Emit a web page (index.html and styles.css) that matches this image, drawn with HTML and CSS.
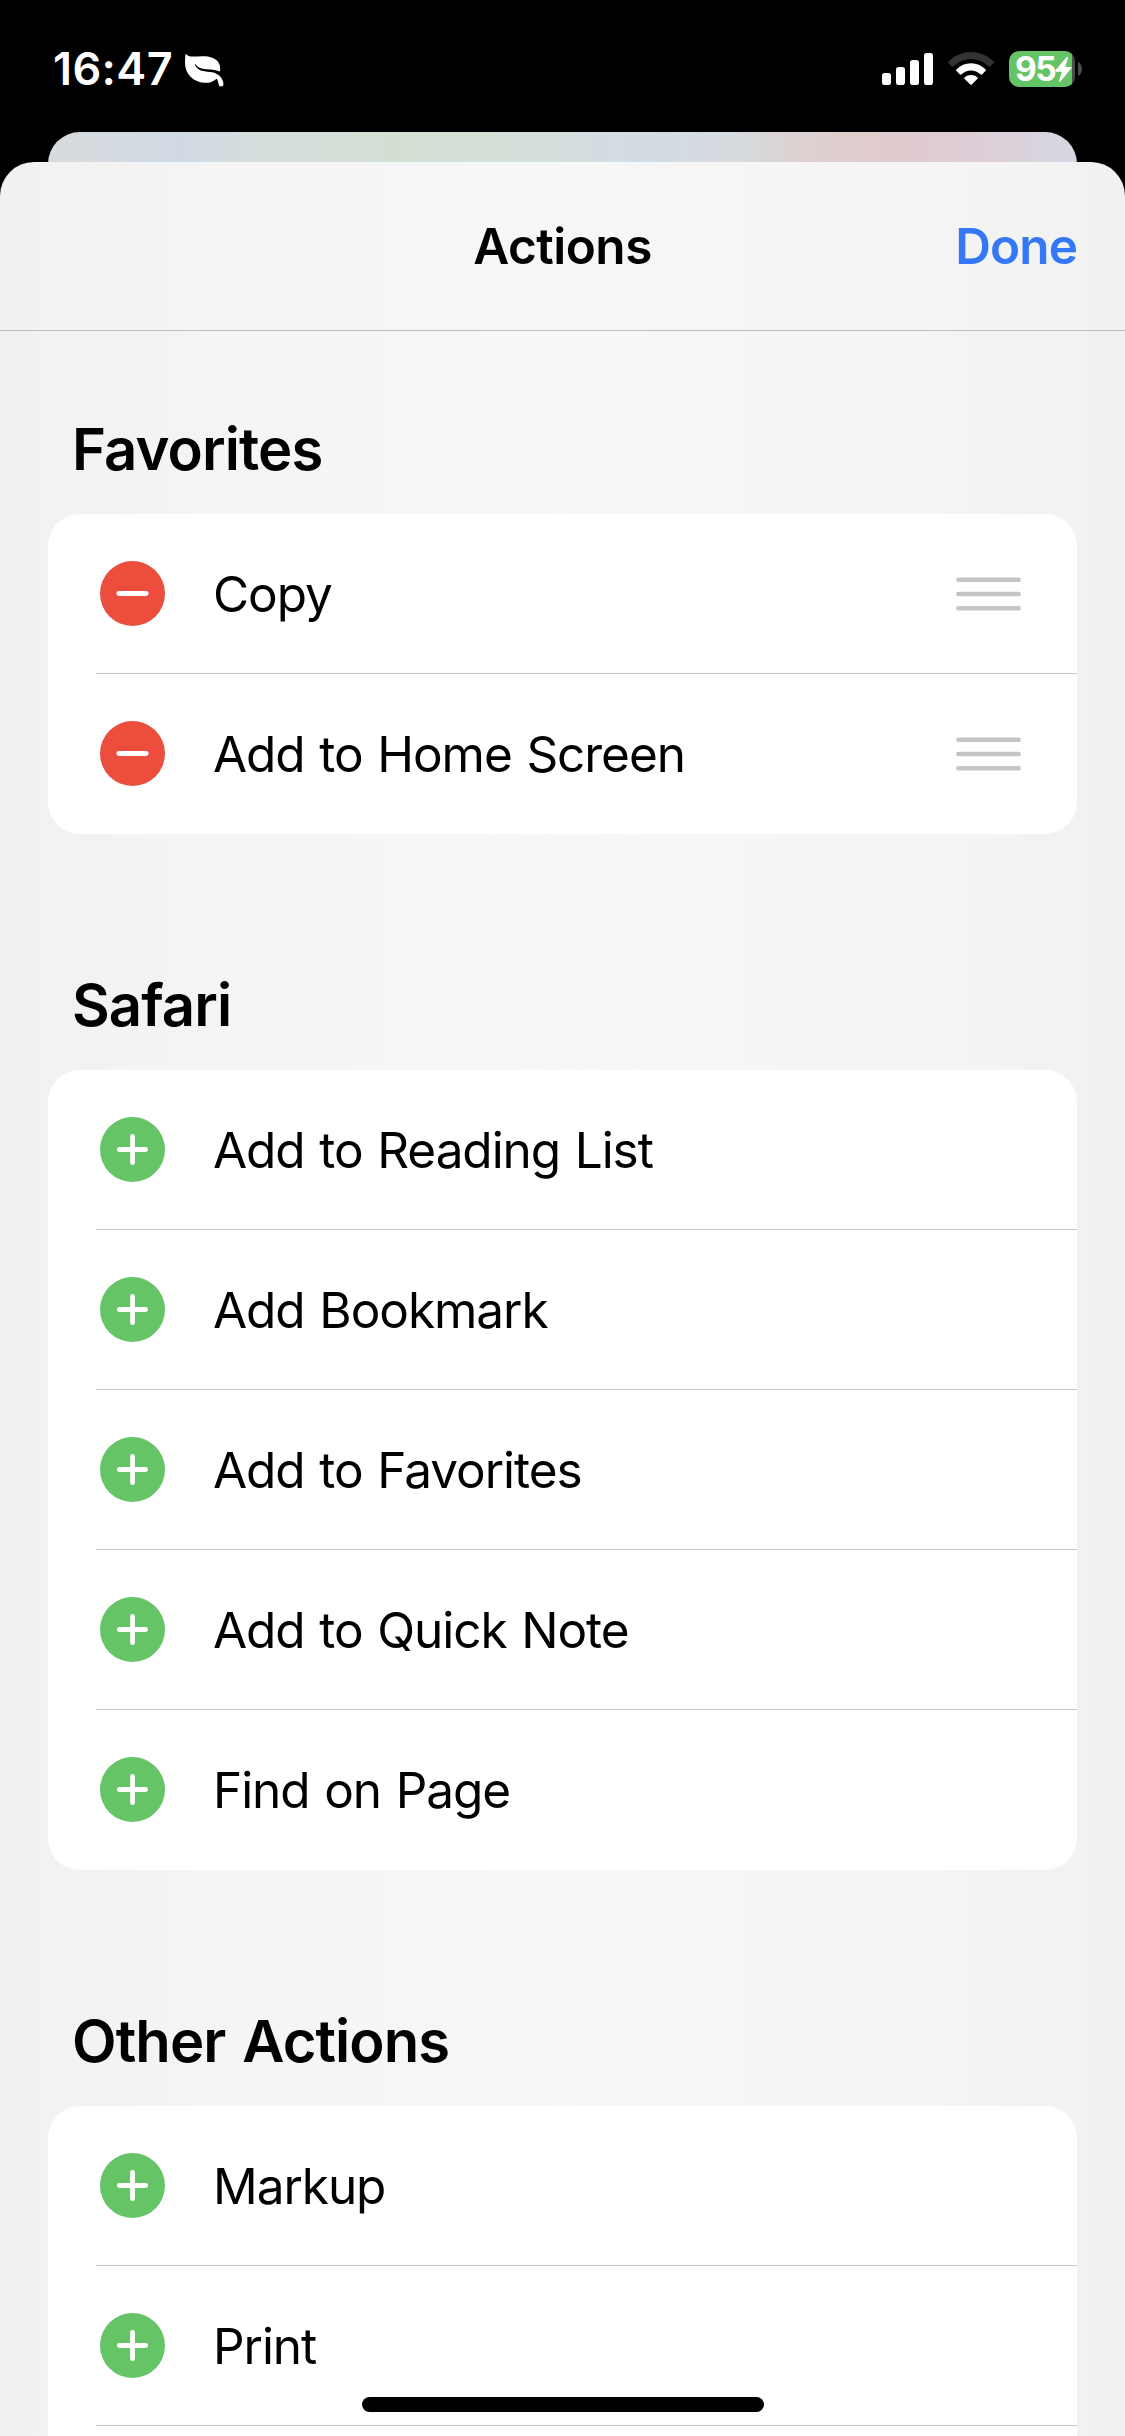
FILE: index.html
```
<!DOCTYPE html>
<html lang="en">
<head>
<meta charset="utf-8">
<title>Actions</title>
<link rel="stylesheet" href="styles.css">
</head>
<body>
<svg class="defs" width="0" height="0" aria-hidden="true">
  <symbol id="plus" viewBox="0 0 65 65"><circle cx="32.5" cy="32.5" r="32.5" fill="#65c466"/><path d="M32.5 19.3v26.4M19.3 32.5h26.4" stroke="#fff" stroke-width="4.8" stroke-linecap="round"/></symbol>
  <symbol id="minus" viewBox="0 0 65 65"><circle cx="32.5" cy="32.5" r="32.5" fill="#eb4e3d"/><path d="M18.8 32.5h27.4" stroke="#fff" stroke-width="4.8" stroke-linecap="round"/></symbol>
  <symbol id="grip" viewBox="0 0 65 34"><path d="M2.3 2.7h60.4M2.3 17h60.4M2.3 31.3h60.4" stroke="#c5c5c7" stroke-width="4.4" stroke-linecap="round"/></symbol>
</svg>
<div class="screen">
  <header class="status">
    <div class="status-left">
      <span class="time">16:47</span>
      <svg class="leaf" viewBox="0 0 39 33"><path fill="#fff" d="M1.2.2C4.500 3.600 10 2.400 17 2.200c9-.2 16 2.300 17.800 9.300.5 2 .5 4 .2 6C30 15.700 26 15.400 21.500 15.200 16.500 15 13.500 14 10.800 10.500c-.5-.6-1.300-.1-.9.6C12 15 15 17 20.500 17.400c6.500.4 10.500 1.100 14 4.400 2.600 2.500 4 6 4 8.700 0 2-3.700 2.800-4.500.8-.7-2-.8-4-2.200-6.600C28 28 23.500 29.200 19 28.800 8 28 0 19.500 0 9 0 5.500.3 2.500.4.600.5 0 .9-.1 1.200.2z"/></svg>
    </div>
    <div class="status-right">
      <svg class="signal" viewBox="0 0 51 32"><g fill="#fff"><rect y="20" width="9" height="12" rx="2.800"/><rect x="14" y="14" width="9" height="18" rx="2.800"/><rect x="28" y="7" width="9" height="25" rx="2.800"/><rect x="42" width="9" height="32" rx="2.800"/></g></svg>
      <svg class="wifi" viewBox="0 0 46 33"><path fill="#333" d="M.6 9.200C6.500 3.400 14.400 0 23 0s16.500 3.400 22.400 9.200c.7.700.7 1.300 0 2l-3 3c-.7.700-1.300.7-2 0C35.800 9.800 29.700 7.200 23 7.200S10.200 9.800 5.600 14.200c-.7.700-1.300.7-2 0l-3-3c-.7-.7-.7-1.300 0-2z"/><path fill="#fff" d="M8.600 17.200C12.400 13.500 17.400 11.300 23 11.300s10.600 2.200 14.400 5.900c.7.700.7 1.200 0 1.900l-3.100 3.100c-.7.700-1.200.6-1.900 0-2.500-2.300-5.800-3.800-9.400-3.800s-6.900 1.500-9.400 3.800c-.7.600-1.200.7-1.900 0l-3.100-3.100c-.7-.7-.7-1.200 0-1.900zM16.800 25.200C18.500 23.800 20.700 23 23 23s4.500.8 6.200 2.200c.7.600.7 1.100.1 1.700l-5.300 5.400c-.7.700-1.300.7-2 0l-5.300-5.400c-.6-.6-.6-1.100.1-1.700z"/></svg>
      <div class="battery"><span class="level">95</span>
        <svg class="bolt" viewBox="0 0 17 25"><path fill="#fff" d="M11.400.2.500 13.300c-.6.700-.3 1.400.6 1.400h5.700L4.200 23.400c-.4 1.300.7 1.900 1.500.9L16.300 11.300c.6-.7.3-1.400-.6-1.400h-5.400l2.600-8.600C13.300 0 12.200-.7 11.400.2z"/></svg>
      </div>
      <svg class="nub" viewBox="0 0 4 14"><path d="M0 0c2.500 1 4 3.800 4 7s-1.500 6-4 7z" fill="#4a4a4a"/></svg>
    </div>
  </header>
  <div class="back-sheet"></div>
  <main class="sheet">
    <div class="navbar"><h1 class="title">Actions</h1><a class="done">Done</a></div>
    <section class="group">
      <h2 class="heading">Favorites</h2>
      <ul class="card">
        <li class="row"><svg class="badge"><use href="#minus"/></svg><div class="cell"><span class="label">Copy</span><svg class="grip"><use href="#grip"/></svg></div></li>
        <li class="row"><svg class="badge"><use href="#minus"/></svg><div class="cell"><span class="label">Add to Home Screen</span><svg class="grip"><use href="#grip"/></svg></div></li>
      </ul>
    </section>
    <section class="group">
      <h2 class="heading">Safari</h2>
      <ul class="card">
        <li class="row"><svg class="badge"><use href="#plus"/></svg><span class="label">Add to Reading List</span></li>
        <li class="row"><svg class="badge"><use href="#plus"/></svg><span class="label">Add Bookmark</span></li>
        <li class="row"><svg class="badge"><use href="#plus"/></svg><span class="label">Add to Favorites</span></li>
        <li class="row"><svg class="badge"><use href="#plus"/></svg><span class="label">Add to Quick Note</span></li>
        <li class="row"><svg class="badge"><use href="#plus"/></svg><span class="label">Find on Page</span></li>
      </ul>
    </section>
    <section class="group last">
      <h2 class="heading">Other Actions</h2>
      <ul class="card open">
        <li class="row"><svg class="badge"><use href="#plus"/></svg><span class="label">Markup</span></li>
        <li class="row"><svg class="badge"><use href="#plus"/></svg><span class="label">Print</span></li>
      </ul>
    </section>
  </main>
  <div class="home-indicator"></div>
</div>
</body>
</html>
```
FILE: styles.css
```
* { box-sizing: border-box; margin: 0; padding: 0; }
body { width: 1125px; height: 2436px; overflow: hidden; background: #000; color: #000; font-family: Inter, "Liberation Sans", sans-serif; }
.defs { position: absolute; }
.screen { position: relative; display: flex; flex-direction: column; height: 2436px; overflow: hidden; }
.status { display: flex; justify-content: space-between; flex: none; height: 132px; padding: 51px 43px 0 53px; color: #fff; }
.status-left, .status-right { display: flex; align-items: flex-start; }
.time { height: 36px; font-size: 45px; font-weight: 600; line-height: 36px; letter-spacing: 0.4px; }
.leaf { width: 39px; height: 33px; margin: 3px 0 0 12px; }
.signal { width: 51px; height: 32px; margin-top: 2px; }
.wifi { width: 46px; height: 33px; margin: 1px 0 0 15px; }
.battery { display: flex; align-items: center; width: 66px; height: 36px; margin-left: 15px; padding-left: 6px; border-radius: 10px; background: linear-gradient(90deg, #65c466 63px, #4a4a4a 63px); }
.level { width: 40px; font-size: 33.5px; font-weight: 700; line-height: 36px; letter-spacing: -1.4px; }
.bolt { flex: none; width: 17px; height: 25px; }
.nub { width: 4px; height: 14px; margin: 11px 0 0 3px; }
.back-sheet { flex: none; height: 70px; margin: 0 48px -40px; border-radius: 32px 32px 0 0; background: linear-gradient(90deg, #d7dbdd 0, #d1dae3 130px, #d6dedb 230px, #d4dfd4 340px, #d4dfd6 440px, #d3dce4 590px, #d6dbdf 690px, #ddd2d2 740px, #e1cbcc 820px, #e0cad0 870px, #dccfd8 940px, #d6d7e1 1029px); }
.sheet { position: relative; flex: 1; display: flex; flex-direction: column; border-radius: 34px 34px 0 0; background: linear-gradient(90deg, #f1f1f1 0, #f5f5f5 240px, #f7f7f7 560px, #f5f5f5 900px, #f1f1f1 1125px); }
.navbar { display: grid; grid-template-columns: 1fr auto 1fr; align-items: center; height: 169px; padding: 0 48px; border-bottom: 1px solid #bfbfc1; }
.title { grid-column: 2; font-size: 49.5px; font-weight: 600; line-height: 60px; letter-spacing: -0.5px; }
.done { justify-self: end; color: #3478f6; font-size: 49.5px; font-weight: 600; line-height: 60px; letter-spacing: -0.9px; }
.group { padding: 0 48px; }
.group.last { display: flex; flex: 1; flex-direction: column; }
.heading { height: 183px; padding: 82px 24px 0; font-size: 58px; font-weight: 600; line-height: 72px; letter-spacing: -0.9px; word-spacing: 3px; }
.group + .group .heading { height: 236px; padding-top: 135px; }
.card { list-style: none; border-radius: 32px; overflow: hidden; background: #fff; }
.card.open { flex: 1; border-radius: 32px 32px 0 0; }
.row { display: flex; align-items: center; height: 160px; padding: 0 56px 0 52px; background: linear-gradient(#c6c6c8, #c6c6c8) 48px 100% / 100% 1px no-repeat; }
.card:not(.open) .row:last-child { background: none; }
.badge { flex: none; width: 65px; height: 65px; margin: 0 48px 1px 0; }
.cell { display: flex; flex: 1; align-items: center; justify-content: space-between; }
.label { font-size: 49.5px; line-height: 60px; letter-spacing: -1.05px; word-spacing: 1.8px; white-space: nowrap; }
.grip { width: 65px; height: 34px; margin-bottom: 1px; }
.home-indicator { position: absolute; left: 362px; top: 2397px; width: 402px; height: 15px; border-radius: 8px; background: #000; }
```
